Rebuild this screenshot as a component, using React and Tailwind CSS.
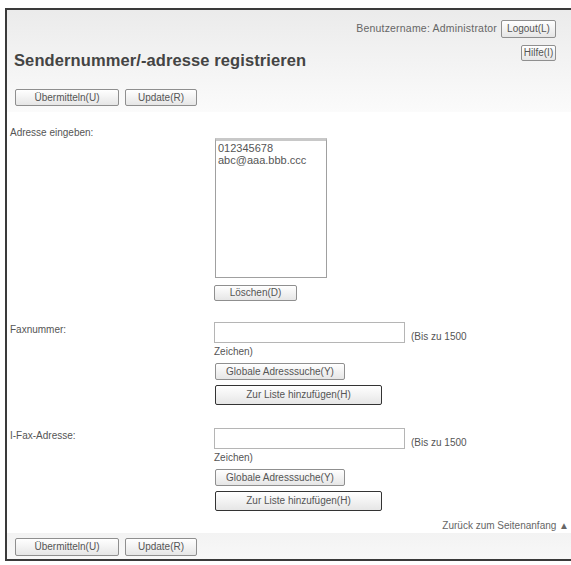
import React from "react";

const font = { fontFamily: '"Liberation Sans", Arial, sans-serif' };

function Btn({ children, className = "" }) {
  return (
    <button
      type="button"
      className={
        "flex items-center justify-center rounded-[2px] border border-[#8f8f8f] bg-gradient-to-b from-[#ffffff] to-[#e6e6e6] text-[10px] leading-none text-[#555] " +
        className
      }
    >
      {children}
    </button>
  );
}

function FieldRow({ label, className = "" }) {
  return (
    <div className={"flex " + className}>
      <div className="w-[207px] shrink-0 pl-[3px] pt-[2px] text-[10px] leading-[12px] text-[#555]">{label}</div>
      <div className="flex flex-col items-start">
        <div className="flex items-end">
          <div className="h-[21px] w-[191px] border border-[#b5b5b5] bg-white" />
          <span className="ml-[6px] text-[10px] leading-[12px] text-[#555]">(Bis zu 1500</span>
        </div>
        <div className="mt-[3px] text-[10px] leading-[12px] text-[#555]">Zeichen)</div>
        <Btn className="ml-[1px] mt-[5px] h-[17px] w-[130px]">Globale Adresssuche(Y)</Btn>
        <Btn className="ml-[1px] mt-[5px] h-[20px] w-[167px] border-[#333] border-[1.5px]">Zur Liste hinzufügen(H)</Btn>
      </div>
    </div>
  );
}

export default function App() {
  return (
    <div className="h-[565px] w-[571px] overflow-hidden bg-white pl-[5px] pt-[8px]" style={font}>
      <div className="flex h-[553px] w-[590px] flex-col border-2 border-[#3a3a3a]">
        {/* Kopfbereich */}
        <div className="h-[102px] bg-gradient-to-b from-[#ebebeb] to-[#fbfbfb] pb-[7px] pr-[37px]">
          <div className="flex items-center justify-end pt-[10px]">
            <span className="mr-[4px] text-[10.5px] tracking-[0.2px] text-[#666]">Benutzername: Administrator</span>
            <Btn className="h-[18px] w-[55px]">Logout(L)</Btn>
          </div>
          <div className="mt-[7px] flex items-start justify-between pl-[7px]">
            <div className="mt-[5px] text-[16.5px] font-bold leading-[20px] tracking-[0.1px] text-[#444]">Sendernummer/-adresse registrieren</div>
            <Btn className="h-[16px] w-[35px]">Hilfe(I)</Btn>
          </div>
          <div className="mt-[19px] flex gap-[6px] pl-[8px]">
            <Btn className="h-[17px] w-[104px]">Übermitteln(U)</Btn>
            <Btn className="h-[17px] w-[72px]">Update(R)</Btn>
          </div>
        </div>

        {/* Inhalt */}
        <div className="flex-1 bg-white pt-[15px]">
          <div className="flex">
            <div className="w-[207px] shrink-0 pl-[3px] text-[10px] leading-[12px] text-[#555]">Adresse eingeben:</div>
            <div className="flex flex-col items-start">
              <div className="mt-[11px] ml-[1px] h-[140px] w-[112px] border border-[#a0a0a0] border-t-[3px] border-t-[#c8c8c8] bg-white px-[2px] pt-[1px] text-[11px] leading-[12px] text-[#555]">
                <div>012345678</div>
                <div>abc@aaa.bbb.ccc</div>
              </div>
              <Btn className="mt-[7px] h-[16px] w-[83px]">Löschen(D)</Btn>
            </div>
          </div>

          <FieldRow label="Faxnummer:" className="mt-[21px]" />
          <FieldRow label="I-Fax-Adresse:" className="mt-[23px]" />

          <div className="mt-[9px] pr-[24px] text-right text-[10px] leading-[12px] text-[#666]">Zurück zum Seitenanfang ▲</div>
        </div>

        {/* Fußbereich */}
        <div className="flex h-[26px] items-center gap-[6px] bg-gradient-to-b from-[#f3f3f3] to-[#f8f8f8] pl-[8px] pt-[2px]">
          <Btn className="h-[18px] w-[104px]">Übermitteln(U)</Btn>
          <Btn className="h-[18px] w-[72px]">Update(R)</Btn>
        </div>
      </div>
    </div>
  );
}
